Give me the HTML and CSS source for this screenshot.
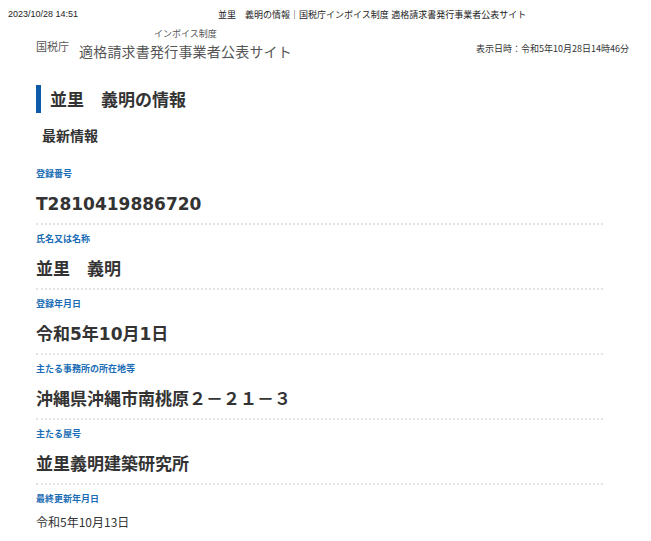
FILE: index.html
```html
<!DOCTYPE html>
<html lang="ja">
<head>
  <meta charset="UTF-8">
  <meta name="viewport" content="width=device-width, initial-scale=1.0">
  <title>並里　義明の情報｜国税庁インボイス制度 適格請求書発行事業者公表サイト</title>
  <link rel="stylesheet" href="styles.css">
</head>
<body>
  <!-- print header -->
  <div class="print-head">
    <span class="print-date">2023/10/28 14:51</span>
    <span class="print-title">並里　義明の情報｜国税庁インボイス制度 適格請求書発行事業者公表サイト</span>
  </div>

  <div class="site-head">
    <div class="logo">
      <span class="logo-nta">国税庁</span>
      <div class="logo-main">
        <span class="logo-sub">インボイス制度</span>
        <span class="logo-title">適格請求書発行事業者公表サイト</span>
      </div>
    </div>
    <div class="disp-date">表示日時：令和5年10月28日14時46分</div>
  </div>

  <div class="content">
    <h1 class="page-title">並里　義明の情報</h1>
    <h2 class="sub-title">最新情報</h2>

    <dl class="info">
      <div class="item">
        <dt>登録番号</dt>
        <dd>T2810419886720</dd>
      </div>
      <div class="item">
        <dt>氏名又は名称</dt>
        <dd>並里　義明</dd>
      </div>
      <div class="item">
        <dt>登録年月日</dt>
        <dd>令和5年10月1日</dd>
      </div>
      <div class="item">
        <dt>主たる事務所の所在地等</dt>
        <dd>沖縄県沖縄市南桃原２－２１－３</dd>
      </div>
      <div class="item">
        <dt>主たる屋号</dt>
        <dd>並里義明建築研究所</dd>
      </div>
      <div class="item last">
        <dt>最終更新年月日</dt>
        <dd>令和5年10月13日</dd>
      </div>
    </dl>
  </div>
</body>
</html>
```

FILE: styles.css
```css
body {
  margin: 0;
  font-family: "Noto Sans CJK JP", "Noto Sans", sans-serif;
  color: #333;
  background: #fff;
}

.print-head {
  display: flex;
  align-items: center;
  height: 28px;
  padding-left: 8px;
  font-size: 9px;
  color: #222;
  font-family: "Liberation Sans", "Noto Sans CJK JP", sans-serif;
}
.print-date {
  width: 210px;
}

.site-head {
  display: flex;
  justify-content: space-between;
  align-items: flex-end;
  padding: 0 22px 0 36px;
  height: 34px;
}
.logo {
  display: flex;
  align-items: flex-end;
  color: #555;
}
.logo-nta {
  font-size: 11px;
  margin-bottom: 8px;
  margin-right: 10px;
}
.logo-main {
  display: flex;
  flex-direction: column;
}
.logo-sub {
  font-size: 9px;
  margin-left: 75px;
  line-height: 12px;
}
.logo-title {
  font-size: 14px;
  line-height: 22px;
  letter-spacing: 0.2px;
}
.disp-date {
  font-size: 9px;
  color: #333;
  margin-bottom: 7px;
}

.content {
  padding: 0 48px 0 36px;
}
.page-title {
  margin: 23px 0 0;
  border-left: 5px solid #0d5aa7;
  padding-left: 9px;
  font-size: 17px;
  line-height: 28px;
  font-weight: bold;
  color: #333;
}
.sub-title {
  margin: 11px 0 0 6px;
  font-size: 14px;
  line-height: 22px;
  font-weight: bold;
  color: #333;
}

.info {
  margin: 20px 0 0;
}
.item {
  border-bottom: 2px dotted #e4e4e4;
  padding-bottom: 6px;
  margin-bottom: 6px;
}
.item.last {
  border-bottom: none;
}
.item dt {
  font-size: 9px;
  line-height: 16px;
  font-weight: bold;
  color: #1a6db5;
}
.item dd {
  margin: 0;
  padding-top: 9px;
  font-family: "DejaVu Sans", "Noto Sans CJK JP", sans-serif;
  font-size: 17px;
  line-height: 26px;
  font-weight: bold;
  color: #333;
}
.item.last dd {
  font-family: "Noto Sans CJK JP", sans-serif;
  font-size: 12px;
  font-weight: normal;
  padding-top: 2px;
}
```
